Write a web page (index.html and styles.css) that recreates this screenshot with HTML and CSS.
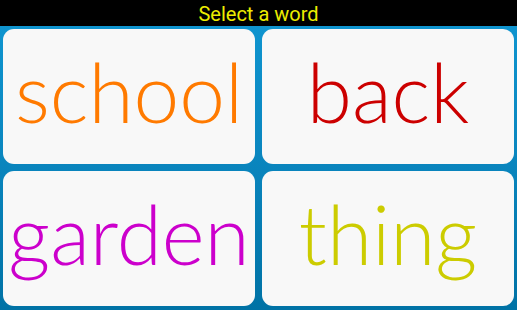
FILE: index.html
```html
<!DOCTYPE html>
<html>
<head>
<meta charset="utf-8">
<link rel="stylesheet" href="styles.css">
</head>
<body>
<header class="bar">Select a word</header>
<main class="grid">
  <div class="card"><span class="word orange">school</span></div>
  <div class="card"><span class="word red">back</span></div>
  <div class="card"><span class="word magenta">garden</span></div>
  <div class="card"><span class="word olive">thing</span></div>
</main>
</body>
</html>
```
FILE: styles.css
```css
html, body {
  margin: 0;
  padding: 0;
  width: 517px;
  height: 310px;
  overflow: hidden;
}
body {
  display: flex;
  flex-direction: column;
  background: linear-gradient(180deg, #1097d2 0%, #0a86bf 50%, #0072a5 100%);
}
.bar {
  height: 26px;
  background: #000;
  color: #ecec00;
  font-family: Roboto, "Liberation Sans", sans-serif;
  font-size: 20px;
  line-height: 28px;
  text-align: center;
  flex: none;
}
.grid {
  flex: 1;
  display: grid;
  grid-template-columns: 252px 252px;
  grid-template-rows: 135px 135px;
  column-gap: 7px;
  row-gap: 7px;
  padding: 3px 3px 4px 3px;
}
.card {
  background: #f8f8f8;
  border-radius: 11px;
  display: flex;
  align-items: center;
  justify-content: center;
}
.word {
  font-family: Lato, "Open Sans", sans-serif;
  font-weight: 300;
  font-size: 82px;
  line-height: 1;
  position: relative;
  top: -6px;
}
.orange { color: #ff7a00; }
.red { color: #cc0000; }
.magenta { color: #cc00cc; }
.olive { color: #cccc00; }
```
